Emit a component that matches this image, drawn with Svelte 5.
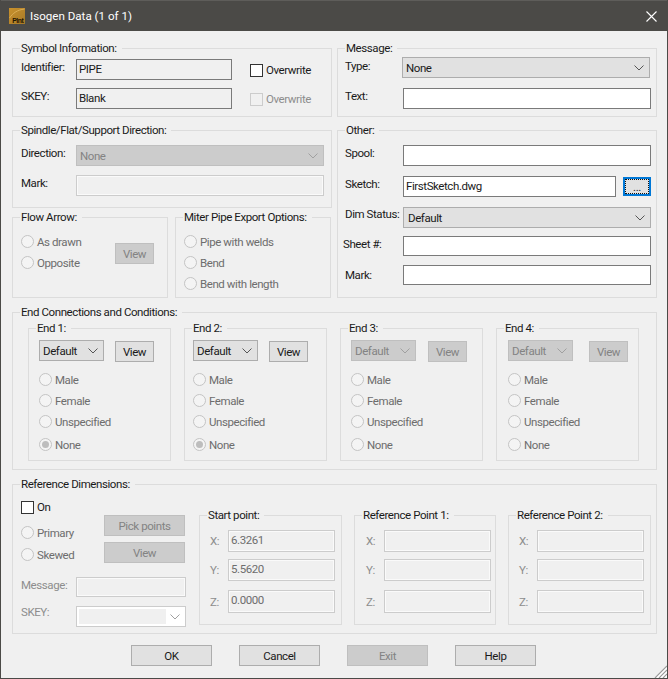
<script>
  const ends = [
    { name: 'End 1:', x: 'e1', on: true, sel: 'none' },
    { name: 'End 2:', x: 'e2', on: true, sel: 'none' },
    { name: 'End 3:', x: 'e3', on: false, sel: '' },
    { name: 'End 4:', x: 'e4', on: false, sel: '' }
  ];
  const points = [
    { name: 'Start point:', x: '6.3261', y: '5.5620', z: '0.0000', cls: 'p1' },
    { name: 'Reference Point 1:', x: '', y: '', z: '', cls: 'p2' },
    { name: 'Reference Point 2:', x: '', y: '', z: '', cls: 'p3' }
  ];
</script>

{#snippet chev(color)}
  <svg class="chev" width="10" height="6" viewBox="0 0 10 6"><path d="M0.5 0.5 L5 5 L9.5 0.5" fill="none" stroke={color} stroke-width="1"/></svg>
{/snippet}

{#snippet radio(label, checked = false)}
  <div class="radio"><span class="dot" class:checked></span><span class="off">{label}</span></div>
{/snippet}

<div class="win">
  <header class="title">
    <svg class="logo" width="16" height="16" viewBox="0 0 16 16">
      <defs>
        <linearGradient id="lg" x1="0" y1="0" x2="1" y2="1">
          <stop offset="0" stop-color="#c8912c"/>
          <stop offset="1" stop-color="#a87a28"/>
        </linearGradient>
      </defs>
      <rect width="16" height="16" fill="url(#lg)"/>
      <path d="M0.5 10 C4 5 8 2 15.5 1" fill="none" stroke="#e2b660" stroke-width="0.8"/>
      <text x="3.2" y="15.4" font-size="6.8" font-weight="700" font-family="Liberation Sans" fill="#1e1400">Plnt</text>
    </svg>
    <span class="ttext">Isogen Data (1 of 1)</span>
    <svg class="close" width="11" height="11" viewBox="0 0 11 11"><path d="M0.5 0.5 L10.5 10.5 M10.5 0.5 L0.5 10.5" stroke="#fff" stroke-width="1.1"/></svg>
  </header>

  <div class="body">
    <div class="top">
      <div class="col">
        <section class="group symbol">
          <span class="legend">Symbol Information:</span>
          <div class="row">
            <span class="lbl w55">Identifier:</span>
            <div class="input ro w156">PIPE</div>
            <div class="check c1"><span class="box"></span><span>Overwrite</span></div>
          </div>
          <div class="row">
            <span class="lbl w55">SKEY:</span>
            <div class="input ro w156">Blank</div>
            <div class="check c1"><span class="box dis"></span><span class="dim">Overwrite</span></div>
          </div>
        </section>

        <section class="group spindle">
          <span class="legend">Spindle/Flat/Support Direction:</span>
          <div class="row">
            <span class="lbl w55">Direction:</span>
            <div class="select dis w248"><span>None</span>{@render chev('#a0a0a0')}</div>
          </div>
          <div class="row">
            <span class="lbl w55">Mark:</span>
            <div class="input dis w248"></div>
          </div>
        </section>

        <div class="split">
          <section class="group flow">
            <span class="legend">Flow Arrow:</span>
            <div class="flowin">
              <div class="radios">
                {@render radio('As drawn')}
                {@render radio('Opposite')}
              </div>
              <div class="btn dis small">View</div>
            </div>
          </section>
          <section class="group miter">
            <span class="legend">Miter Pipe Export Options:</span>
            <div class="radios">
              {@render radio('Pipe with welds')}
              {@render radio('Bend')}
              {@render radio('Bend with length')}
            </div>
          </section>
        </div>
      </div>

      <div class="col">
        <section class="group symbol message">
          <span class="legend">Message:</span>
          <div class="row">
            <span class="lbl w58">Type:</span>
            <div class="select act w248 shift"><span>None</span>{@render chev('#555')}</div>
          </div>
          <div class="row">
            <span class="lbl w58">Text:</span>
            <div class="input w248"></div>
          </div>
        </section>
        <section class="group other">
          <span class="legend">Other:</span>
          <div class="row">
            <span class="lbl w58">Spool:</span>
            <div class="input w248"></div>
          </div>
          <div class="row">
            <span class="lbl w58">Sketch:</span>
            <div class="input w213">FirstSketch.dwg</div>
            <div class="dots"><span>...</span></div>
          </div>
          <div class="row">
            <span class="lbl w58 up">Dim Status:</span>
            <div class="select act w248 wider"><span>Default</span>{@render chev('#555')}</div>
          </div>
          <div class="row r2">
            <span class="lbl w58 sheet">Sheet #:</span>
            <div class="input w248 h20"></div>
          </div>
          <div class="row r2">
            <span class="lbl w58 down">Mark:</span>
            <div class="input w248 h20"></div>
          </div>
        </section>
      </div>
    </div>

    <section class="group ends">
      <span class="legend">End Connections and Conditions:</span>
      <div class="endrow">
        {#each ends as e}
          <section class="group end {e.x}">
            <span class="legend">{e.name}</span>
            <div class="endhead">
              <div class="select w65 {e.on ? 'act' : 'dis'}"><span>Default</span>{@render chev(e.on ? '#555' : '#a0a0a0')}</div>
              <div class="btn small {e.on ? 'act' : 'dis'}">View</div>
            </div>
            <div class="radios">
              {@render radio('Male')}
              {@render radio('Female')}
              {@render radio('Unspecified')}
              <div class="last">{@render radio('None', e.sel === 'none')}</div>
            </div>
          </section>
        {/each}
      </div>
    </section>

    <section class="group refdim">
      <span class="legend">Reference Dimensions:</span>
      <div class="refrow">
        <div class="refleft">
          <div class="check on"><span class="box"></span><span>On</span></div>
          <div class="rbtns">
            <div class="radios">
              {@render radio('Primary')}
              {@render radio('Skewed')}
            </div>
            <div class="btncol">
              <div class="btn dis wide">Pick points</div>
              <div class="btn dis wide">View</div>
            </div>
          </div>
          <div class="row msg">
            <span class="lbl w55 dim">Message:</span>
            <div class="input dis w110 h20"></div>
          </div>
          <div class="row skey">
            <span class="lbl w55 dim up2">SKEY:</span>
            <div class="select skeysel w110"><span class="inner"></span>{@render chev('#a0a0a0')}</div>
          </div>
        </div>
        {#each points as p}
          <section class="group point {p.cls}">
            <span class="legend">{p.name}</span>
            {#each [['X:', p.x, 'h22'], ['Y:', p.y, 'h22'], ['Z:', p.z, 'h23']] as [l, v, h]}
              <div class="prow">
                <span class="plbl dim">{l}</span>
                <div class="input dis w107 {h} val">{v}</div>
              </div>
            {/each}
          </section>
        {/each}
      </div>
    </section>

    <div class="actions">
      <div class="btn act foot">OK</div>
      <div class="btn act foot">Cancel</div>
      <div class="btn dis foot">Exit</div>
      <div class="btn act foot">Help</div>
    </div>
  </div>

  <svg class="grip" width="14" height="14" viewBox="0 0 14 14">
    <path d="M14 2 L2 14 M14 6 L6 14 M14 10 L10 14" stroke="#9a9a9a" stroke-width="1.2"/>
    <path d="M14 4 L4 14 M14 8 L8 14 M14 12 L12 14" stroke="#fff" stroke-width="1.2"/>
  </svg>
</div>

<style>
  :global(body) { margin: 0; }
  .win {
    position: relative;
    width: 668px; height: 679px; box-sizing: border-box;
    background: #f0f0f0;
    border: 1px solid #4b4a47; border-top: 0;
    font-family: Roboto, sans-serif;
    font-size: 11.5px; letter-spacing: -0.42px; line-height: 16px; color: #1a1a1a;
    overflow: hidden;
  }
  .title {
    height: 31px; background: #4b4a47; color: #fff;
    display: flex; align-items: center;
    padding: 0 10px 0 8px;
    margin: 0 -1px;
    border-top: 1px solid #5e5d5a; box-sizing: border-box;
  }
  .logo { flex: none; margin-left: 1px; }
  .ttext { margin-left: 5px; font-size: 11.6px; letter-spacing: 0; }
  .close { margin-left: auto; margin-right: 1px; }
  .body { padding: 17px 0 0 11px; }
  .top { display: flex; gap: 5px; }
  .col { width: 320px; display: flex; flex-direction: column; }
  .group {
    position: relative; box-sizing: border-box;
    border: 1px solid #dcdcdc;
  }
  .legend {
    position: absolute; top: -9px; left: 7px;
    padding: 0 5px 0 1px; background: #f0f0f0; white-space: nowrap;
  }
  .row { display: flex; align-items: flex-start; }
  .lbl { flex: none; white-space: nowrap; }
  .w55 { width: 55px; }
  .w58 { width: 58px; }
  .w156 { width: 156px; }
  .w248 { width: 248px; }
  .w213 { width: 213px; }
  .w110 { width: 110px; }
  .w107 { width: 107px; }
  .w65 { width: 65px; }
  .input {
    box-sizing: border-box; height: 21px; flex: none;
    border: 1px solid #7a7a7a; background: #fff;
    padding: 0 2px; line-height: 18px;
  }
  .input.ro { background: #f0f0f0; border-color: #7a7a7a; }
  .input.dis { background: #f0f0f0; border-color: #cccccc; box-shadow: inset 0 0 0 1px #fafafa; }
  .h20 { height: 20px; }
  .h22 { height: 22px; }
  .h23 { height: 23px; }
  .select {
    box-sizing: border-box; height: 21px; flex: none;
    display: flex; align-items: center; justify-content: space-between;
    padding: 0 5px 0 3px;
  }
  .wider { padding-left: 4px; }
  .select.act { background: #e1e1e1; border: 1px solid #adadad; }
  .select.dis { background: #cccccc; border: 1px solid #bfbfbf; color: #838383; }
  .chev { flex: none; }
  .btn {
    box-sizing: border-box; height: 21px; flex: none;
    display: flex; align-items: center; justify-content: center;
  }
  .btn.act { background: #e1e1e1; border: 1px solid #adadad; }
  .btn.dis { background: #cccccc; border: 1px solid #bfbfbf; color: #838383; }
  .small { width: 39px; }
  .wide { width: 81px; }
  .foot { width: 81px; }
  .dim { color: #8d8d8d; }
  .off { color: #6d6d6d; }
  .check { display: flex; align-items: center; gap: 3px; flex: none; line-height: 15px; }
  .box {
    box-sizing: border-box; width: 13px; height: 13px;
    border: 1px solid #333; background: #fff;
  }
  .box.dis { border-color: #cccccc; background: #f0f0f0; }
  .radios { display: flex; flex-direction: column; }
  .radio { display: flex; align-items: center; gap: 3px; height: 21px; white-space: nowrap; }
  .dot {
    box-sizing: border-box; flex: none; width: 13px; height: 13px; border-radius: 50%;
    border: 1px solid #c4c4c4; background: #f4f4f4; position: relative;
  }
  .dot.checked::after {
    content: ""; position: absolute; inset: 2px; border-radius: 50%; background: #bdbdbd;
  }

  .symbol { height: 69px; padding: 10px 0 0 8px; display: flex; flex-direction: column; gap: 8px; }
  .c1 { margin: 4px 0 0 18px; }
  .spindle { height: 78px; margin-top: 13px; padding: 14px 0 0 8px; display: flex; flex-direction: column; gap: 9px; }
  .split { display: flex; gap: 7px; margin-top: 9px; }
  .flow, .miter { width: 156px; height: 81px; }
  .flow { padding: 13px 0 0 8px; }
  .flowin { display: flex; gap: 0; justify-content: space-between; padding-right: 13px; }
  .flowin .btn { margin-top: 12px; }
  .miter { padding: 13px 0 0 8px; }

  .message { padding: 9px 0 0 7px; gap: 10px; }
  .shift { margin: -1px 0 0 -1px; }
  .other { height: 168px; margin-top: 13px; padding: 14px 0 0 7px; display: flex; flex-direction: column; gap: 10px; }
  .r2 { margin-top: -2px; }
  .r2 + .r2 { margin-top: -1px; }
  .up { margin-top: -1px; }
  .down { margin-top: 2px; }
  .dots {
    box-sizing: border-box; width: 28px; height: 19px; margin: 1px 0 0 7px;
    border: 2px solid #0078d7; background: #e1e1e1;
    display: flex; align-items: flex-end; justify-content: center;
    line-height: 13px; outline: 1px dotted #111; outline-offset: -3px;
  }
  .sheet { margin-left: -2px; width: 60px; }

  .ends { width: 645px; height: 158px; margin-top: 14px; }
  .endrow { position: relative; }
  .end { position: absolute; top: 15px; width: 143px; height: 133px; padding: 11px 0 0 10px; }
  .e1 { left: 15px; }
  .e2 { left: 171px; padding-left: 8px; }
  .e3 { left: 327px; padding-left: 10px; }
  .e4 { left: 483px; padding-left: 11px; }
  .endhead { display: flex; gap: 11px; align-items: flex-start; height: 29px; }
  .endhead .btn { margin-top: 1px; }
  .e3 .endhead { gap: 12px; }
  .e4 .endhead { gap: 16px; }
  .last { margin-top: 2px; }

  .refdim { width: 645px; height: 150px; margin-top: 14px; }
  .refrow { display: flex; padding: 16px 0 0 8px; }
  .refleft { width: 178px; flex: none; }
  .on { height: 13px; }
  .rbtns { display: flex; justify-content: space-between; width: 164px; margin-top: 1px; }
  .rbtns .radios { padding-top: 7px; gap: 1px; }
  .btncol { display: flex; flex-direction: column; gap: 6px; }
  .msg { margin-top: 12px; }
  .skey { margin-top: 9px; }
  .up2 { margin-top: -2px; }
  .skeysel { background: #fff; border: 1px solid #cccccc; padding: 2px 5px 2px 2px; height: 21px; }
  .skeysel .inner { width: 87px; height: 15px; background: #f0f0f0; }
  .point { width: 143px; height: 110px; margin-top: 14px; padding: 14px 0 0 10px; display: flex; flex-direction: column; gap: 7px; flex: none; }
  .p2 { margin-left: 12px; width: 142px; padding-left: 11px; }
  .p3 { margin-left: 12px; }
  .prow { display: flex; align-items: center; }
  .prow:last-child { margin-top: 2px; }
  .plbl { width: 18px; flex: none; }
  .val { color: #6d6d6d; }

  .actions { display: flex; gap: 27px; margin: 11px 0 0 119px; }

  .grip { position: absolute; right: 0; bottom: 0; }
</style>
